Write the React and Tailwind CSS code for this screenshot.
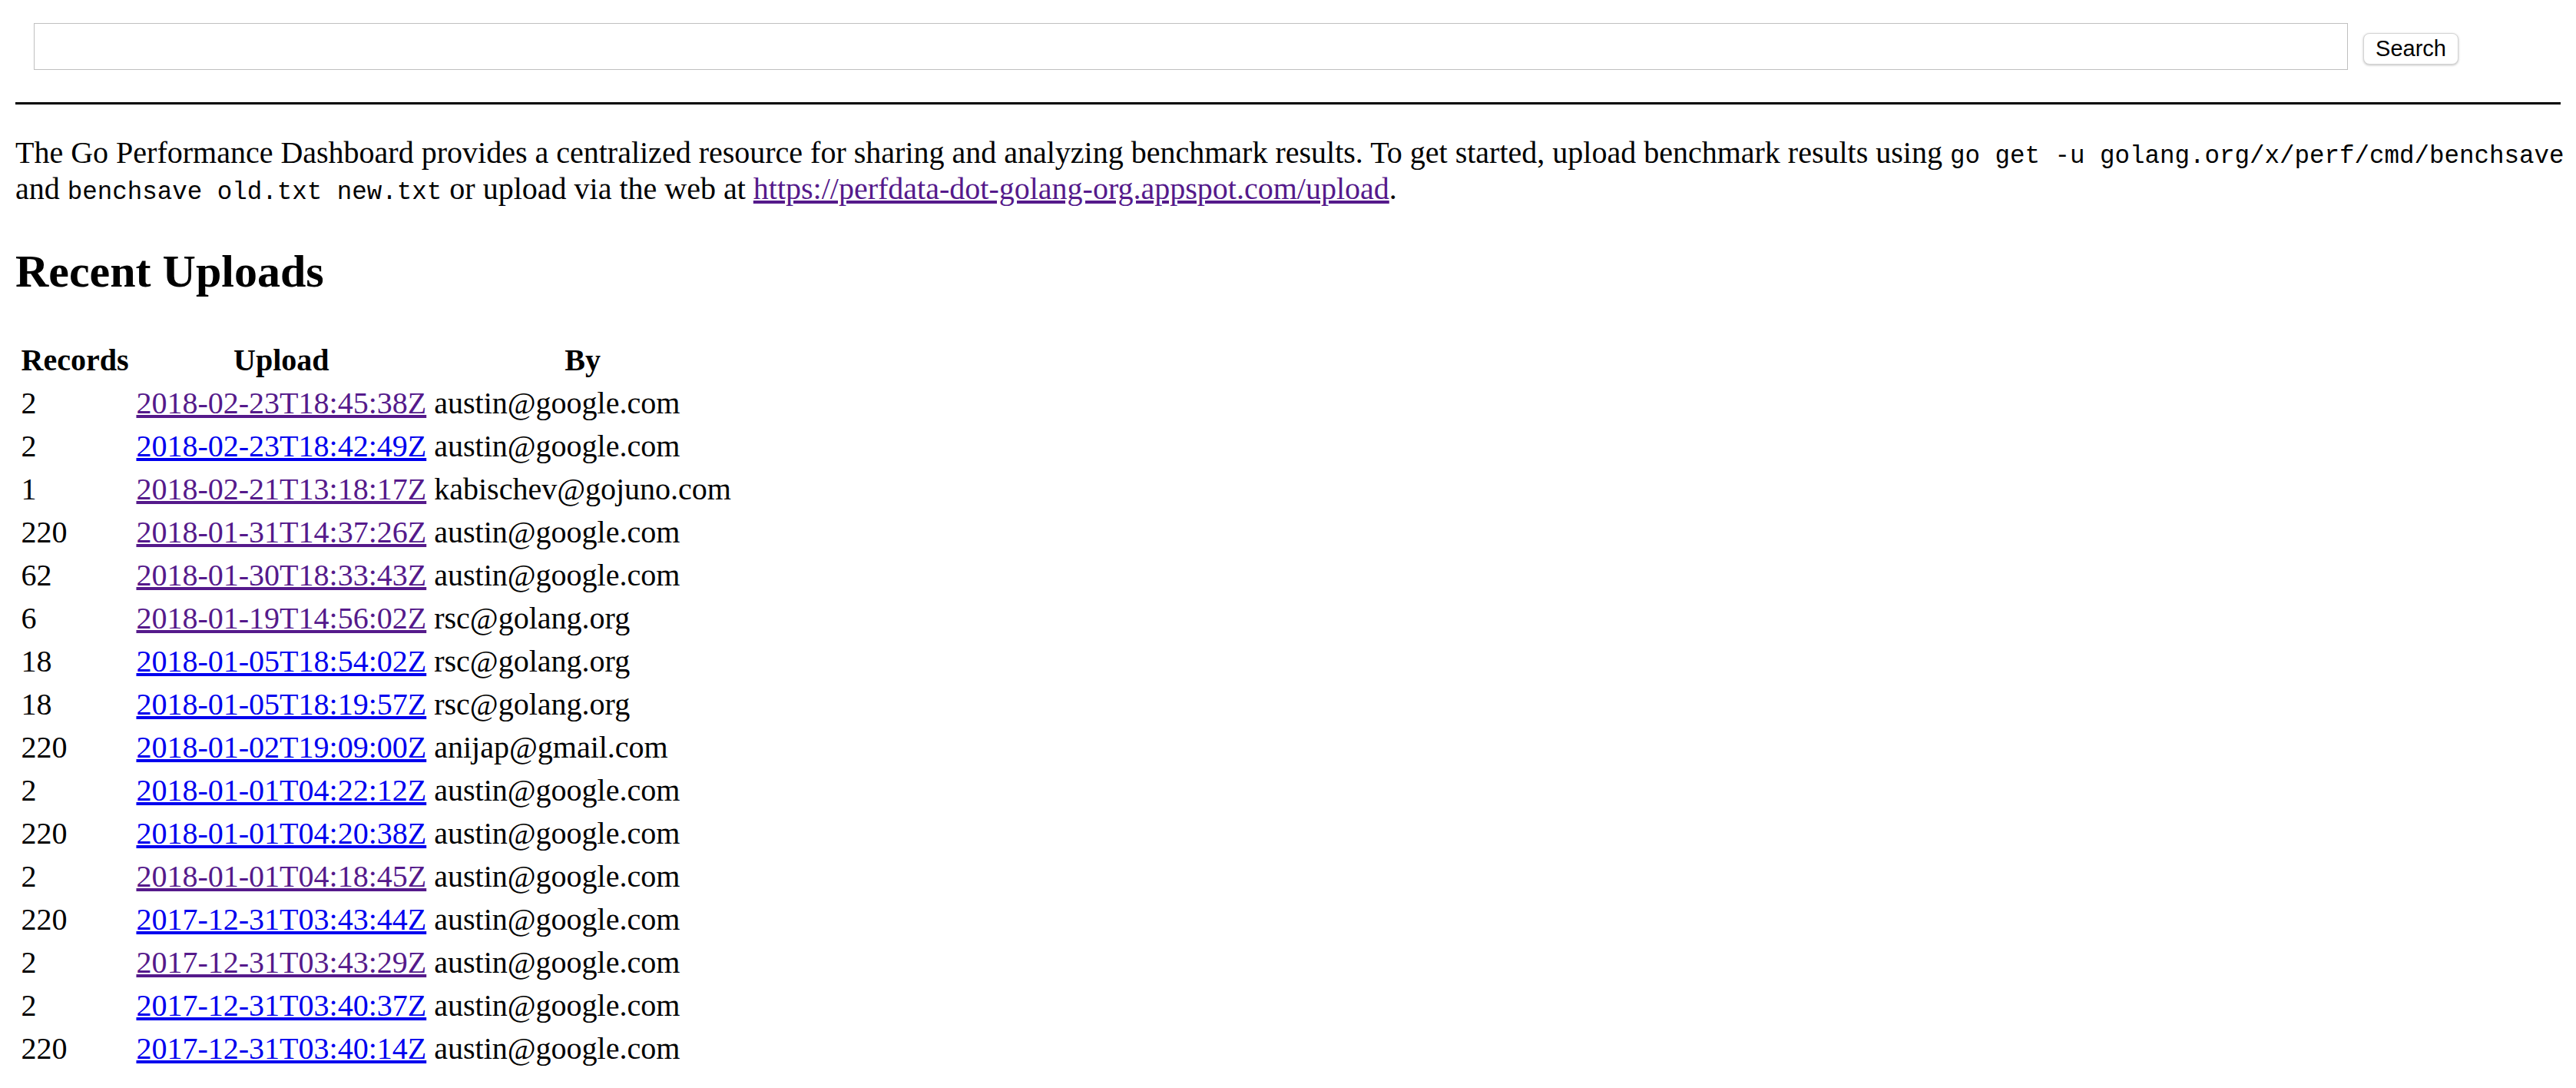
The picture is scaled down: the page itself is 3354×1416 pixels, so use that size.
const uploads = [
  [2, "2018-02-23T18:45:38Z", "austin@google.com", true],
  [2, "2018-02-23T18:42:49Z", "austin@google.com", false],
  [1, "2018-02-21T13:18:17Z", "kabischev@gojuno.com", true],
  [220, "2018-01-31T14:37:26Z", "austin@google.com", true],
  [62, "2018-01-30T18:33:43Z", "austin@google.com", true],
  [6, "2018-01-19T14:56:02Z", "rsc@golang.org", true],
  [18, "2018-01-05T18:54:02Z", "rsc@golang.org", false],
  [18, "2018-01-05T18:19:57Z", "rsc@golang.org", false],
  [220, "2018-01-02T19:09:00Z", "anijap@gmail.com", false],
  [2, "2018-01-01T04:22:12Z", "austin@google.com", false],
  [220, "2018-01-01T04:20:38Z", "austin@google.com", false],
  [2, "2018-01-01T04:18:45Z", "austin@google.com", true],
  [220, "2017-12-31T03:43:44Z", "austin@google.com", false],
  [2, "2017-12-31T03:43:29Z", "austin@google.com", true],
  [2, "2017-12-31T03:40:37Z", "austin@google.com", false],
  [220, "2017-12-31T03:40:14Z", "austin@google.com", false],
];

const Code = ({ children }) => (
  <code className="font-['Liberation_Mono',monospace] text-[32.5px]">{children}</code>
);

const App = () => {
  return (
    <div className="bg-white p-[20px] font-['Liberation_Serif',serif] text-[40px] leading-[normal] text-black">
      <form className="flex items-start pl-[24px] pt-[10px]" onSubmit={(e) => e.preventDefault()}>
        <input
          type="text"
          className="h-[61px] w-[3013px] border border-[#c0c0c0] bg-white px-2 outline-none"
        />
        <button
          type="submit"
          className="ml-[20px] mt-[13px] h-[41px] w-[124px] rounded-[8px] border border-[#d4d4d4] bg-white font-['Liberation_Sans',sans-serif] text-[29px] leading-none text-black shadow-[0_1px_3px_rgba(0,0,0,0.25)]"
        >
          Search
        </button>
      </form>

      <hr className="mt-[42px] border-0 border-t-[3px] border-black" />

      <p className="mt-[39px]">
        <span className="whitespace-nowrap">
          The Go Performance Dashboard provides a centralized resource for sharing and analyzing
          benchmark results. To get started, upload benchmark results using{" "}
          <Code>go get -u golang.org/x/perf/cmd/benchsave</Code>
        </span>
        <br />
        and <Code>benchsave old.txt new.txt</Code> or upload via the web at{" "}
        <a href="#" className="text-[#551A8B] underline">
          https://perfdata-dot-golang-org.appspot.com/upload
        </a>
        .
      </p>

      <h2 className="mt-[50px] mb-[50px] text-[60px] font-bold">Recent Uploads</h2>

      <table className="border-separate border-spacing-[5px]">
        <thead>
          <tr>
            <th className="p-[2.5px] text-center font-bold leading-[46px]">Records</th>
            <th className="p-[2.5px] text-center font-bold leading-[46px]">Upload</th>
            <th className="p-[2.5px] text-center font-bold leading-[46px]">By</th>
          </tr>
        </thead>
        <tbody>
          {uploads.map(([records, time, by, visited]) => (
            <tr key={time}>
              <td className="p-[2.5px] leading-[46px]">{records}</td>
              <td className="p-[2.5px] leading-[46px]">
                <a
                  href="#"
                  className={visited ? "text-[#551A8B] underline" : "text-[#0000EE] underline"}
                >
                  {time}
                </a>
              </td>
              <td className="p-[2.5px] leading-[46px]">{by}</td>
            </tr>
          ))}
        </tbody>
      </table>
    </div>
  );
};

export default App;
